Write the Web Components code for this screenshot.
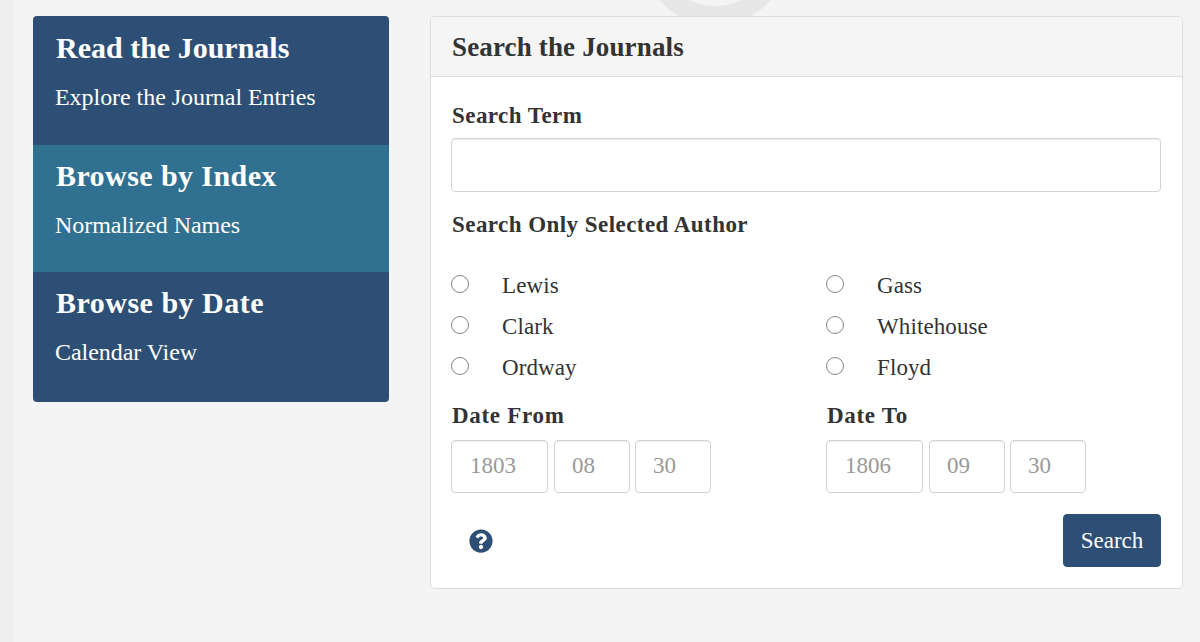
<!DOCTYPE html>
<html>
<head>
<meta charset="utf-8">
<style>
  html, body { margin: 0; height: 100%; }
  body {
    background: #f4f4f4;
    font-family: "Liberation Serif", "Times New Roman", serif;
    color: #333;
    overflow: hidden;
  }
</style>
</head>
<body>
<journal-page>
  <nav-stack slot="nav">
    <nav-tile heading="Read the Journals" sub="Explore the Journal Entries" style="--track: 0"></nav-tile>
    <nav-tile heading="Browse by Index" sub="Normalized Names" style="--track: 0.42px" active></nav-tile>
    <nav-tile heading="Browse by Date" sub="Calendar View" style="--track: 0.5px"></nav-tile>
  </nav-stack>
  <search-panel slot="main" heading="Search the Journals"></search-panel>
</journal-page>

<script>
class JournalPage extends HTMLElement {
  constructor() {
    super();
    this.attachShadow({ mode: 'open' });
    this.shadowRoot.innerHTML = `
      <style>
        :host {
          display: block;
          position: relative;
          width: 1200px;
          height: 642px;
          overflow: hidden;
          box-sizing: border-box;
          border-left: 13px solid #eeeeee;
        }
        .watermark {
          position: absolute;
          left: 622px;
          top: -130px;
          width: 160px;
          height: 160px;
        }
        .row {
          position: relative;
          display: flex;
          align-items: flex-start;
          padding: 16px 0 0 20px;
          gap: 41px;
        }
      </style>
      <svg class="watermark" viewBox="0 0 160 160">
        <circle cx="80" cy="80" r="65.5" fill="none" stroke="#e7e7e7" stroke-width="19"/>
      </svg>
      <div class="row">
        <slot name="nav"></slot>
        <slot name="main"></slot>
      </div>
    `;
  }
}

class NavStack extends HTMLElement {
  constructor() {
    super();
    this.attachShadow({ mode: 'open' });
    this.shadowRoot.innerHTML = `
      <style>
        :host {
          display: block;
          width: 356px;
          border-radius: 4px;
          overflow: hidden;
        }
      </style>
      <slot></slot>
    `;
  }
}

class NavTile extends HTMLElement {
  constructor() {
    super();
    this.attachShadow({ mode: 'open' });
    this.shadowRoot.innerHTML = `
      <style>
        :host {
          display: block;
          box-sizing: border-box;
          height: 130px;
          padding: 13px 22px 0;
          background: #2e4f75;
          color: #fff;
        }
        :host(:first-child) { height: 129px; padding-top: 14px; }
        :host([active]) { background: #307090; height: 127px; }
        h3 {
          margin: 0;
          padding-left: 1px;
          font-size: 30px;
          line-height: 36px;
          font-weight: bold;
          letter-spacing: var(--track, 0);
        }
        p {
          margin: 17px 0 0;
          font-size: 24px;
          line-height: 28px;
          letter-spacing: -0.05px;
        }
      </style>
      <h3></h3>
      <p></p>
    `;
    this.shadowRoot.querySelector('h3').textContent = this.getAttribute('heading');
    this.shadowRoot.querySelector('p').textContent = this.getAttribute('sub');
  }
}

class AuthorRadio extends HTMLElement {
  constructor() {
    super();
    this.attachShadow({ mode: 'open' });
    this.shadowRoot.innerHTML = `
      <style>
        :host {
          display: flex;
          align-items: center;
          height: 41px;
          font-size: 23px;
          letter-spacing: 0.1px;
          color: #333;
        }
        i {
          box-sizing: border-box;
          width: 18px;
          height: 18px;
          border: 1px solid #858585;
          border-radius: 50%;
          background: #fff;
          margin-right: 33px;
          margin-bottom: 3px;
          flex: none;
        }
      </style>
      <i></i><slot></slot>
    `;
  }
}

class DateBox extends HTMLElement {
  constructor() {
    super();
    this.attachShadow({ mode: 'open' });
    this.shadowRoot.innerHTML = `
      <style>
        :host {
          display: block;
          box-sizing: border-box;
          height: 53px;
          padding: 0 17px;
          border: 1px solid #d4d4d4;
          border-radius: 4px;
          box-shadow: inset 0 1px 1px rgba(0,0,0,0.075);
          background: #fff;
          color: #999;
          font-size: 23px;
          line-height: 50px;
        }
        :host(:first-child) { padding: 0 18px; margin-right: 1px; }
      </style>
      <slot></slot>
    `;
  }
}

class DateGroup extends HTMLElement {
  constructor() {
    super();
    this.attachShadow({ mode: 'open' });
    this.shadowRoot.innerHTML = `
      <style>
        :host { display: block; }
        label {
          display: block;
          font-weight: bold;
          font-size: 23px;
          line-height: 28px;
          letter-spacing: 0.7px;
          padding-left: 1px;
          margin-bottom: 10px;
        }
        .boxes { display: flex; gap: 5px; }
        .boxes date-box:nth-child(1) { width: 97px; }
        .boxes date-box:nth-child(2) { width: 76px; }
        .boxes date-box:nth-child(3) { width: 76px; }
      </style>
      <label></label>
      <div class="boxes"></div>
    `;
    this.shadowRoot.querySelector('label').textContent = this.getAttribute('label');
    const boxes = this.shadowRoot.querySelector('.boxes');
    for (const v of this.getAttribute('values').split(',')) {
      const box = document.createElement('date-box');
      box.textContent = v;
      boxes.appendChild(box);
    }
  }
}

class SearchPanel extends HTMLElement {
  constructor() {
    super();
    this.attachShadow({ mode: 'open' });
    this.shadowRoot.innerHTML = `
      <style>
        :host {
          display: block;
          box-sizing: border-box;
          width: 753px;
          height: 573px;
          background: #fff;
          border: 1px solid #ddd;
          border-radius: 5px;
          overflow: hidden;
        }
        header {
          box-sizing: border-box;
          height: 60px;
          padding: 0 21px;
          background: #f5f5f5;
          border-bottom: 1px solid #ddd;
          font-size: 27px;
          line-height: 60px;
          letter-spacing: 0.15px;
          font-weight: bold;
          color: #333;
        }
        .body { padding: 25px 21px 0 20px; }
        .lbl {
          font-weight: bold;
          font-size: 23px;
          line-height: 28px;
          letter-spacing: 0.45px;
          padding-left: 1px;
        }
        .term {
          box-sizing: border-box;
          height: 54px;
          margin-top: 8px;
          border: 1px solid #d4d4d4;
          border-radius: 4px;
          box-shadow: inset 0 1px 1px rgba(0,0,0,0.075);
        }
        .author { margin-top: 19px; }
        .radios {
          display: grid;
          grid-template-columns: 375px 1fr;
          margin-top: 26px;
        }
        .col { display: flex; flex-direction: column; }
        .dates {
          display: grid;
          grid-template-columns: 375px 1fr;
          margin-top: 14px;
        }
        .foot {
          display: flex;
          justify-content: space-between;
          align-items: center;
          margin-top: 21px;
          padding-left: 18px;
        }
        .help { width: 24px; height: 24px; display: block; }
        button {
          box-sizing: border-box;
          width: 98px;
          height: 53px;
          padding: 0;
          border: 1px solid #2e4f75;
          border-radius: 4px;
          background: #2e4f75;
          color: #fff;
          font: 23px "Liberation Serif", "Times New Roman", serif;
        }
      </style>
      <header></header>
      <div class="body">
        <div class="lbl">Search Term</div>
        <div class="term"></div>
        <div class="lbl author">Search Only Selected Author</div>
        <div class="radios">
          <div class="col">
            <author-radio>Lewis</author-radio>
            <author-radio>Clark</author-radio>
            <author-radio>Ordway</author-radio>
          </div>
          <div class="col">
            <author-radio>Gass</author-radio>
            <author-radio>Whitehouse</author-radio>
            <author-radio>Floyd</author-radio>
          </div>
        </div>
        <div class="dates">
          <date-group label="Date From" values="1803,08,30"></date-group>
          <date-group label="Date To" values="1806,09,30"></date-group>
        </div>
        <div class="foot">
          <svg class="help" viewBox="0 0 512 512">
            <path fill="#2e4f75" d="M504 256c0 136.997-111.043 248-248 248S8 392.997 8 256C8 119.083 119.043 8 256 8s248 111.083 248 248zM262.655 90c-54.497 0-89.255 22.957-116.549 63.758-3.536 5.286-2.353 12.415 2.715 16.258l34.699 26.31c5.205 3.947 12.621 3.008 16.665-2.122 17.864-22.658 30.113-35.797 57.303-35.797 20.429 0 45.698 13.148 45.698 32.958 0 14.976-12.363 22.667-32.534 33.976C247.128 238.528 216 254.941 216 296v4c0 6.627 5.373 12 12 12h56c6.627 0 12-5.373 12-12v-1.333c0-28.462 83.186-29.647 83.186-106.667 0-58.002-60.165-102-116.531-102zM256 338c-25.365 0-46 20.635-46 46 0 25.364 20.635 46 46 46s46-20.636 46-46c0-25.365-20.635-46-46-46z"/>
          </svg>
          <button>Search</button>
        </div>
      </div>
    `;
    this.shadowRoot.querySelector('header').textContent = this.getAttribute('heading');
  }
}

customElements.define('journal-page', JournalPage);
customElements.define('nav-stack', NavStack);
customElements.define('nav-tile', NavTile);
customElements.define('author-radio', AuthorRadio);
customElements.define('date-box', DateBox);
customElements.define('date-group', DateGroup);
customElements.define('search-panel', SearchPanel);
</script>
</body>
</html>
